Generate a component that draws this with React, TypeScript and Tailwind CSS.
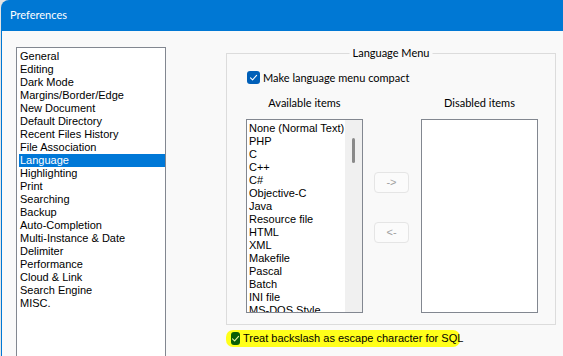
import React from "react";

const segoe = { fontFamily: 'Lato, "Noto Sans", sans-serif' };
const tahoma = { fontFamily: '"Liberation Sans", Arial, sans-serif' };

const leftItems = [
  "General",
  "Editing",
  "Dark Mode",
  "Margins/Border/Edge",
  "New Document",
  "Default Directory",
  "Recent Files History",
  "File Association",
  "Language",
  "Highlighting",
  "Print",
  "Searching",
  "Backup",
  "Auto-Completion",
  "Multi-Instance & Date",
  "Delimiter",
  "Performance",
  "Cloud & Link",
  "Search Engine",
  "MISC.",
];

const langItems = [
  "None (Normal Text)",
  "PHP",
  "C",
  "C++",
  "C#",
  "Objective-C",
  "Java",
  "Resource file",
  "HTML",
  "XML",
  "Makefile",
  "Pascal",
  "Batch",
  "INI file",
  "MS-DOS Style",
];

function Check({ color }: { color: string }) {
  return (
    <svg width="9" height="9" viewBox="0 0 9 9" fill="none">
      <polyline points="1.5,4.8 3.6,6.8 7.6,2.3" stroke={color} strokeWidth="1.1" strokeLinecap="round" strokeLinejoin="round" />
    </svg>
  );
}

export default function App() {
  return (
    <div className="w-[563px] h-[356px] overflow-hidden bg-[#e4e4e4]">
      <div className="ml-[1px] h-full flex flex-col rounded-tl-[8px] overflow-hidden bg-[#0078d4]">
        <div className="h-[31px] shrink-0 flex items-center pl-[9px] pb-[1px] text-white text-[11px]" style={segoe}>
          Preferences
        </div>
        <div className="flex-1 ml-[1px] bg-[#f9f9f9] flex pl-[14px] pt-[16px]">
          {/* Left category list */}
          <div className="w-[150px] h-[330px] shrink-0 border border-[#828790] bg-white pl-[2px] pt-[2px] text-[11px] text-black" style={tahoma}>
            {leftItems.map((it) => (
              <div
                key={it}
                className={
                  "h-[13px] leading-[13px] pl-[1px] whitespace-nowrap " +
                  (it === "Language" ? "bg-[#0078d7] text-white" : "")
                }
              >
                {it}
              </div>
            ))}
          </div>

          {/* Right side */}
          <div className="ml-[60px] pt-[6px] flex flex-col">
            <div className="relative w-[330px] h-[272px] border border-[#dcdcdc] pl-[19px] pt-[17px]">
              <span
                className="absolute -top-[9px] left-1/2 -translate-x-1/2 px-[3px] bg-[#f9f9f9] text-[11px] leading-[16px] text-black whitespace-nowrap"
                style={segoe}
              >
                Language Menu
              </span>
              <div className="flex items-center h-[13px] ml-[1px]">
                <div className="w-[13px] h-[13px] rounded-[3px] bg-[#005fb8] flex items-center justify-center">
                  <Check color="#ffffff" />
                </div>
                <span className="ml-[3px] text-[11px] leading-[16px] text-black whitespace-nowrap" style={segoe}>
                  Make language menu compact
                </span>
              </div>
              <div className="flex mt-[11px] text-[11px] leading-[16px] text-black" style={segoe}>
                <div className="w-[117px] text-center">Available items</div>
                <div className="w-[117px] ml-[58px] text-center">Disabled items</div>
              </div>
              <div className="flex mt-[8px]">
                <div className="w-[117px] h-[194px] border border-[#828790] bg-white flex overflow-hidden">
                  <div className="flex-1 pl-[2px] pt-[2px] text-[11px] text-black overflow-hidden" style={tahoma}>
                    {langItems.map((it) => (
                      <div key={it} className="h-[13px] leading-[13px] whitespace-nowrap">
                        {it}
                      </div>
                    ))}
                  </div>
                  <div className="w-[17px] bg-[#f0f0f0] flex justify-center pt-[18px]">
                    <div className="w-[3px] h-[25px] rounded-full bg-[#8a8a8a]" />
                  </div>
                </div>
                <div className="w-[35px] ml-[11px] pt-[53px] flex flex-col gap-[29px]">
                  <div className="h-[21px] rounded-[4px] border border-[#e5e5e5] bg-[#fbfbfb] flex items-center justify-center text-[11px] text-[#a0a0a0]" style={tahoma}>
                    -&gt;
                  </div>
                  <div className="h-[21px] rounded-[4px] border border-[#e5e5e5] bg-[#fbfbfb] flex items-center justify-center text-[11px] text-[#a0a0a0]" style={tahoma}>
                    &lt;-
                  </div>
                </div>
                <div className="w-[117px] h-[194px] ml-[12px] border border-[#828790] bg-white" />
              </div>
            </div>

            <div className="mt-[5px] w-[234px] h-[17px] rounded-[7px] bg-[#ffff1a] flex items-center pl-[5px]">
              <div className="w-[13px] h-[13px] rounded-[3px] bg-[#0a5f05] flex items-center justify-center">
                <Check color="#e8f5a0" />
              </div>
              <span className="ml-[3px] text-[11px] leading-[13px] text-black whitespace-nowrap" style={tahoma}>
                Treat backslash as escape character for SQL
              </span>
            </div>
          </div>
        </div>
      </div>
    </div>
  );
}
